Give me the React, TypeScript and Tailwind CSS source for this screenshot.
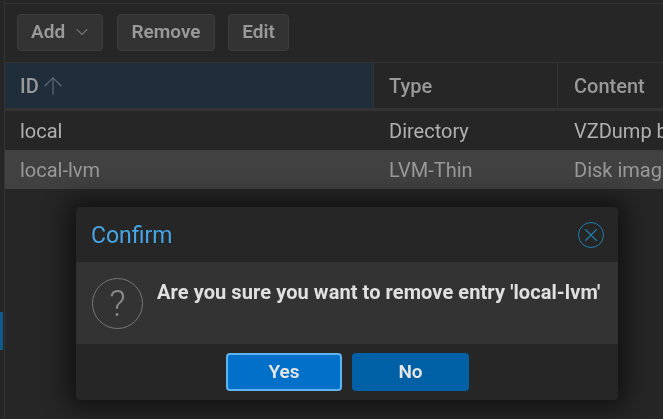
import { ChevronDown, ArrowUp, X } from 'lucide-react';

function ToolButton({ label, className, children }: { label: string; className: string; children?: React.ReactNode }) {
  return (
    <button type="button" className={`h-[37px] flex items-center rounded-[4px] border border-[#3d3d3d] bg-[#333333] text-[19px] font-semibold text-[#9a9a9a] ${className}`}>
      {label}
      {children}
    </button>
  );
}

function Row({ id, type, content, selected }: { id: string; type: string; content: string; selected?: boolean }) {
  return (
    <div className={`flex h-[39px] items-center text-[20px] whitespace-nowrap ${selected ? 'bg-[#414141] text-[#999999]' : 'text-[#b0b0b0]'}`}>
      <div className="w-[369px] shrink-0 pl-[15px]">{id}</div>
      <div className="w-[184px] shrink-0 pl-[15px]">{type}</div>
      <div className="pl-[16px]">{content}</div>
    </div>
  );
}

export default function App() {
  return (
    <div className="relative h-[419px] w-[663px] overflow-hidden bg-[#262626] font-['Roboto','Liberation_Sans',sans-serif] blur-[0.4px]">
      <div className="flex h-full">
        <div className="relative w-[5px] shrink-0 border-r border-[#333333]">
          <div className="absolute left-0 top-[312px] h-[38px] w-[3px] bg-[#0f5a8c]" />
        </div>
        <div className="min-w-0 flex-1">
          <div className="h-[4px] border-b border-[#333333]" />
          <div className="flex h-[58px] items-center pl-[12px] pb-[2px]">
            <ToolButton label="Add" className="w-[86px] pl-[13px]">
              <ChevronDown size={20} strokeWidth={1.25} className="ml-[7px] text-[#8c8c8c]" />
            </ToolButton>
            <ToolButton label="Remove" className="ml-[14px] w-[98px] justify-center" />
            <ToolButton label="Edit" className="ml-[13px] w-[61px] justify-center" />
          </div>
          <div className="flex h-[49px] border-b-[3px] border-t border-[#333333] text-[20px] font-medium text-[#999999] whitespace-nowrap">
            <div className="flex w-[369px] shrink-0 items-center border-r border-[#333333] bg-[#1f2e3a] pl-[15px]">
              ID
              <ArrowUp size={28} strokeWidth={1} className="text-[#5f6b75]" />
            </div>
            <div className="flex w-[184px] shrink-0 items-center border-r border-[#333333] pl-[15px]">Type</div>
            <div className="flex items-center pl-[16px]">Content</div>
          </div>
          <Row id="local" type="Directory" content="VZDump backup" />
          <Row id="local-lvm" type="LVM-Thin" content="Disk image" selected />
        </div>
      </div>

      <div className="absolute left-[76px] top-[207px] w-[542px] overflow-hidden rounded-[4px] bg-[#262626] shadow-[0_0_24px_8px_rgba(0,0,0,0.55)]">
        <div className="flex h-[55px] items-center justify-between pl-[15px] pr-[14px]">
          <span className="pt-[3px] text-[23px] text-[#45a5e5]">Confirm</span>
          <span className="flex h-[26px] w-[26px] items-center justify-center rounded-full border-[1.5px] border-[#1f7fb0]">
            <X size={22} strokeWidth={1.25} className="text-[#1f7fb0]" />
          </span>
        </div>
        <div className="flex h-[82px] bg-[#333333] pl-[16px] pt-[16px]">
          <span className="flex h-[51px] w-[51px] shrink-0 items-center justify-center rounded-full border-[1.5px] border-[#777777] text-[36px] font-light text-[#8a8a8a]">?</span>
          <span className="ml-[14px] pt-[2px] text-[20px] font-bold leading-[24px] tracking-[0.08px] text-[#e0e0e0] whitespace-nowrap">Are you sure you want to remove entry 'local-lvm'</span>
        </div>
        <div className="flex h-[56px] items-start gap-[10px] pl-[150px] pt-[9px]">
          <button type="button" className="h-[38px] w-[116px] rounded-[4px] border-2 border-[#5fb4f0] bg-[#0070c8] text-[19px] font-semibold text-[#e6e6e6]">Yes</button>
          <button type="button" className="h-[38px] w-[117px] rounded-[4px] bg-[#0060a6] text-[19px] font-semibold text-[#e6e6e6]">No</button>
        </div>
      </div>
    </div>
  );
}
